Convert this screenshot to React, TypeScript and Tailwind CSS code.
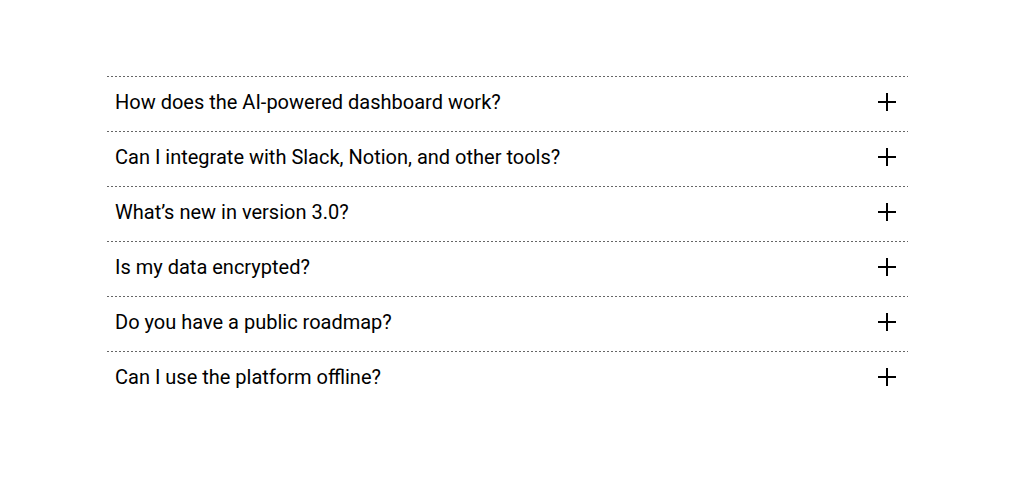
const faqs = [
  "How does the AI-powered dashboard work?",
  "Can I integrate with Slack, Notion, and other tools?",
  "What’s new in version 3.0?",
  "Is my data encrypted?",
  "Do you have a public roadmap?",
  "Can I use the platform offline?",
];

function PlusIcon() {
  return (
    <svg width="24" height="24" viewBox="0 0 24 24" fill="none" stroke="currentColor" strokeWidth="2">
      <line x1="12" y1="3" x2="12" y2="21" />
      <line x1="3" y1="12" x2="21" y2="12" />
    </svg>
  );
}

export default function App() {
  return (
    <div className="min-h-[498px] bg-white px-[107px] pt-[76px] font-['Roboto',sans-serif] text-black">
      <div className="w-[800px]">
        {faqs.map((q, i) => (
          <div key={i}>
            {/* dotted divider */}
            <div className="h-px w-[801px] bg-[linear-gradient(to_right,#666_50%,transparent_50%)] bg-[length:4px_1px] bg-repeat-x" />
            <button className="flex h-[54px] w-full items-center justify-between pb-1 pl-2 pr-2 text-left">
              <span className="text-[20px] leading-7">{q}</span>
              <PlusIcon />
            </button>
          </div>
        ))}
      </div>
    </div>
  );
}
